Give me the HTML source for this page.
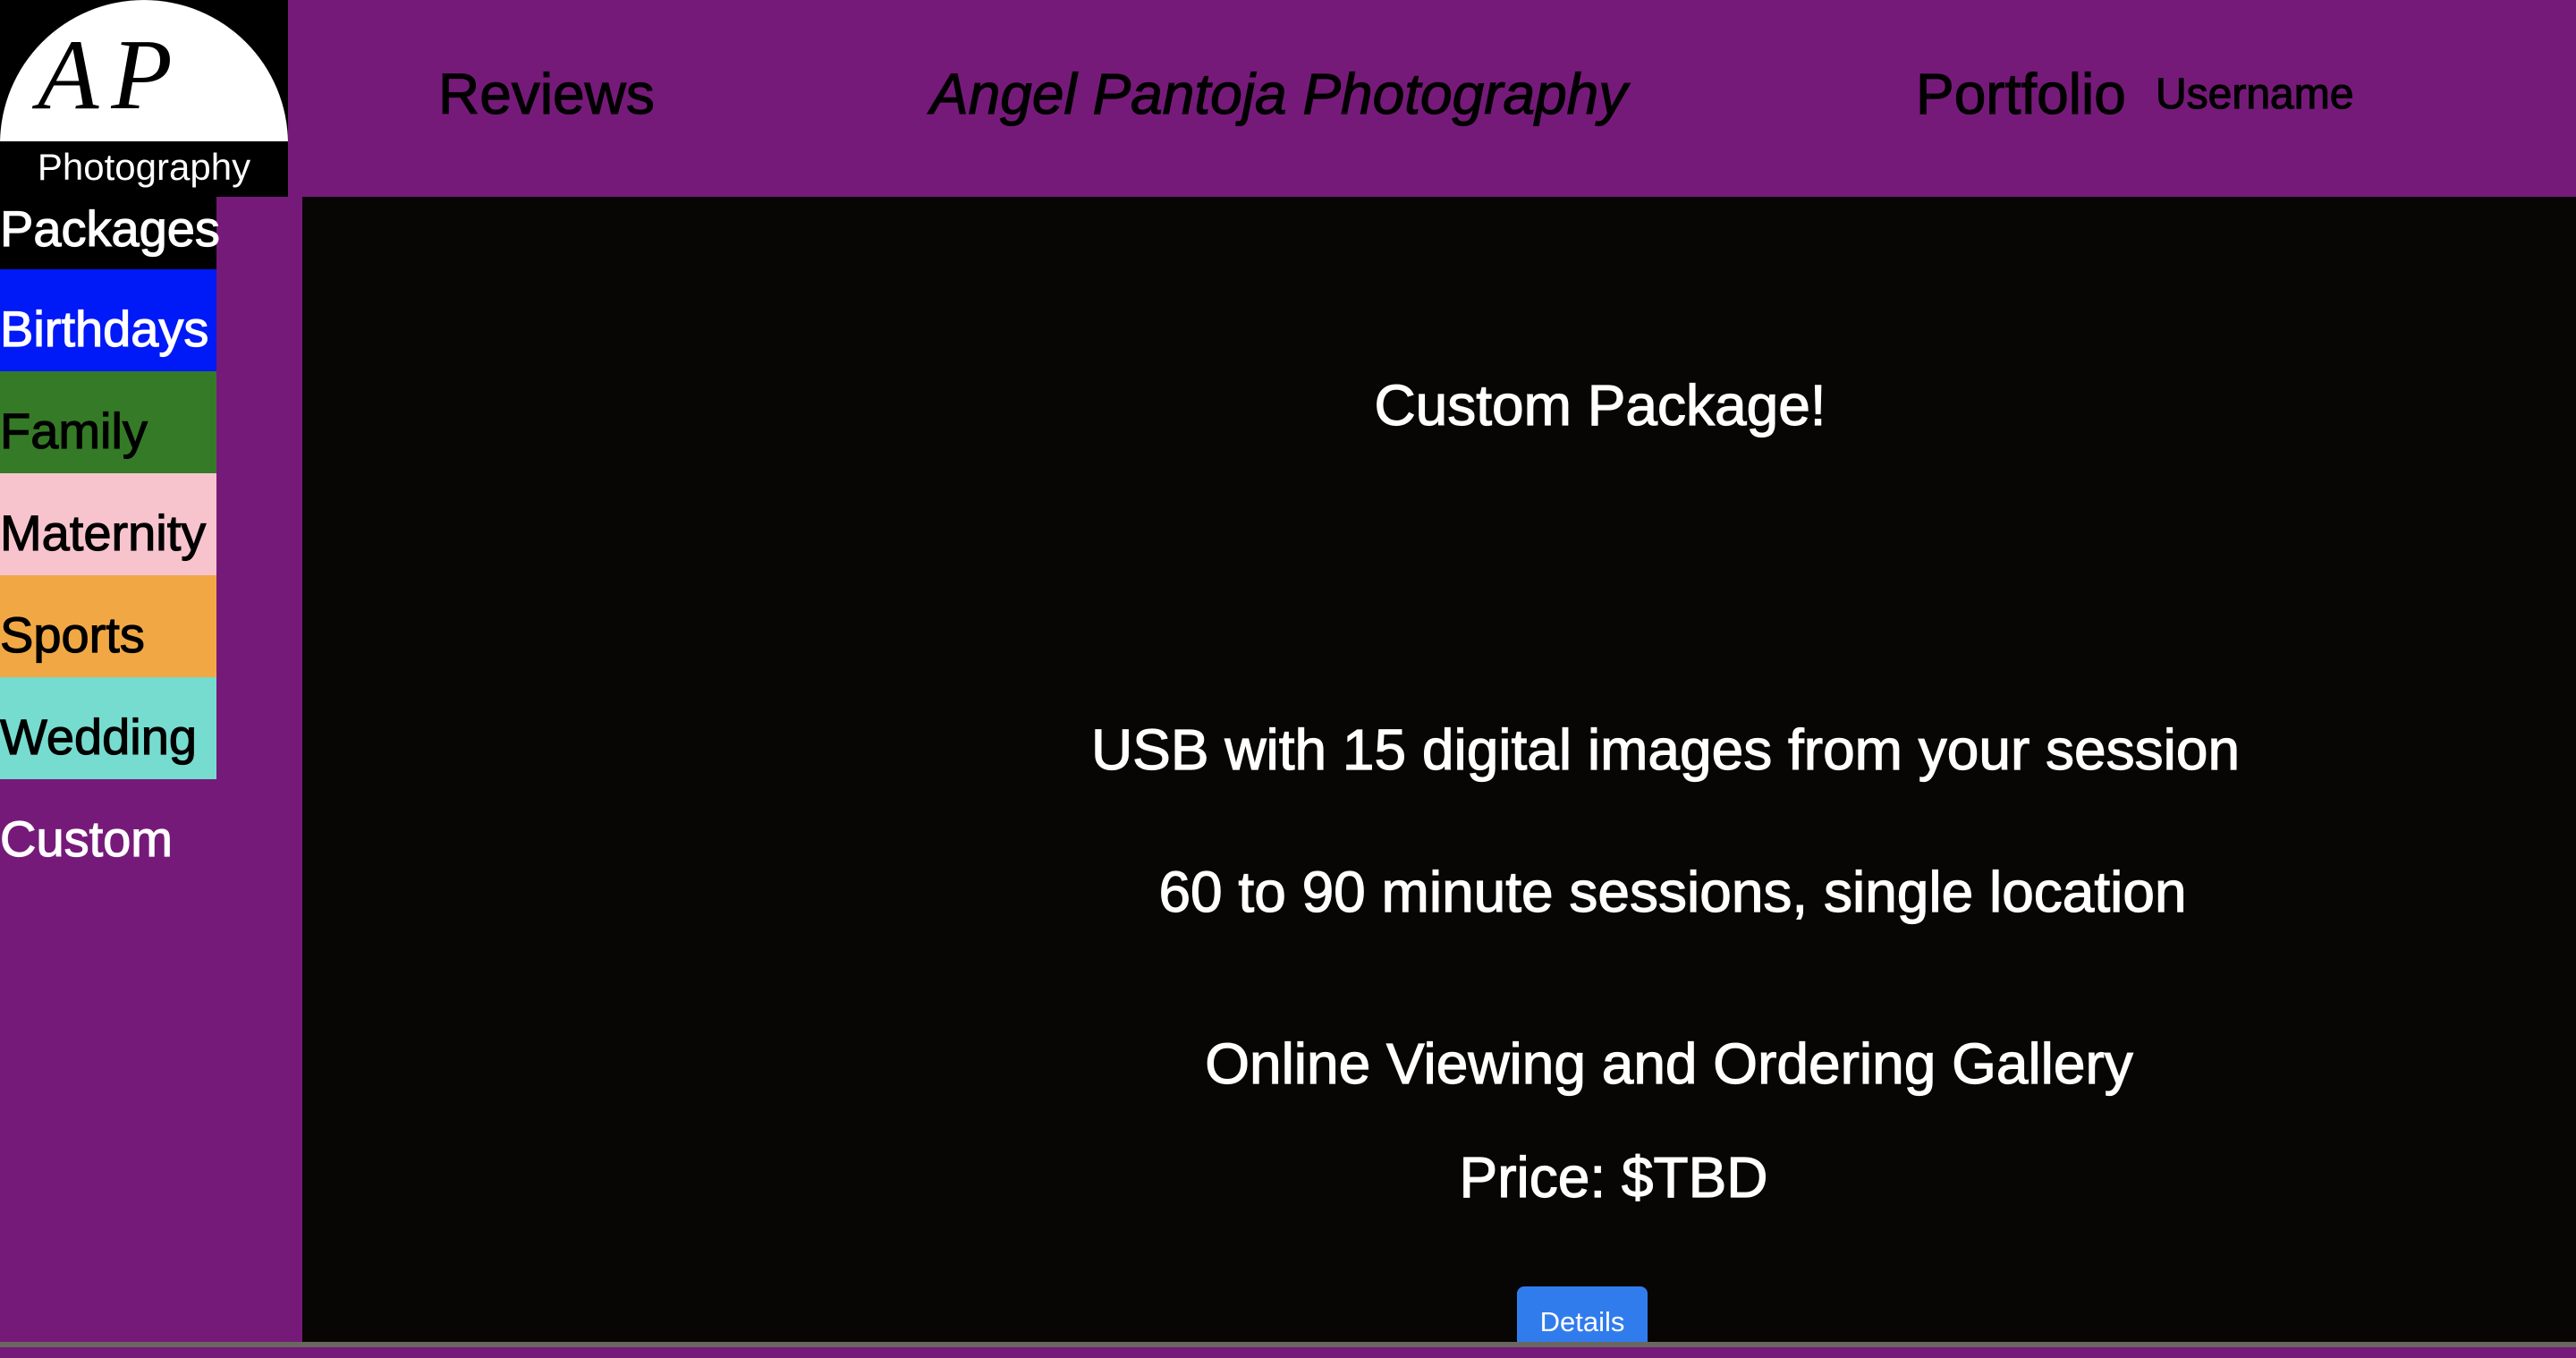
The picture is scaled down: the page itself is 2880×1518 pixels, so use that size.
<!DOCTYPE html>
<html><head><meta charset="utf-8"><style>
html,body{margin:0;padding:0;width:2880px;height:1506px;overflow:hidden;background:#761a7a;font-family:"Liberation Sans",sans-serif}
.a{position:absolute;white-space:nowrap}
.s{-webkit-text-stroke:1.2px currentColor}
.nav{position:absolute;left:0;width:242px;height:114px;font-size:56px;line-height:134px;-webkit-text-stroke:1.2px currentColor;white-space:nowrap}
.c{position:absolute;width:0;display:flex;justify-content:center;color:#fff;font-size:64px;white-space:nowrap;-webkit-text-stroke:1.2px #fff}
</style></head><body>
<div class="a" style="left:0;top:0;width:322px;height:220px;background:#000;overflow:hidden">
 <div style="position:absolute;left:0;top:0;width:322px;height:320px;border-radius:161px 161px 0 0;background:#fff;clip-path:inset(0 0 162px 0)"></div>
 <div class="a" style="left:42px;top:28px;font-family:'Liberation Serif',serif;font-style:italic;font-size:112px;line-height:112px;color:#000;letter-spacing:14px">AP</div>
 <div class="a" style="left:0;width:322px;top:158px;text-align:center;color:#fff;font-size:42px;line-height:58px">Photography</div>
</div>
<div class="a s" style="left:490px;top:68px;font-size:64px">Reviews</div>
<div class="a s" style="left:1040px;top:68px;font-size:64px;font-style:italic">Angel Pantoja Photography</div>
<div class="a s" style="left:2142px;top:68px;font-size:64px">Portfolio</div>
<div class="a s" style="left:2410px;top:78px;font-size:48px">Username</div>
<div class="a" style="left:338px;top:220px;width:2542px;height:1280px;background:#070604"></div>
<div class="a" style="left:0;top:1500px;width:2880px;height:6px;background:#6a6660"></div>
<div class="nav" style="top:220px;height:81px;line-height:72px;background:#000;color:#fff">Packages</div>
<div class="nav" style="top:301px;background:#0019f7;color:#fff">Birthdays</div>
<div class="nav" style="top:415px;background:#357a26;color:#000">Family</div>
<div class="nav" style="top:529px;background:#f7c4ce;color:#000">Maternity</div>
<div class="nav" style="top:643px;background:#f1a844;color:#000">Sports</div>
<div class="nav" style="top:757px;background:#76dccf;color:#000">Wedding</div>
<div class="nav" style="top:871px;color:#fff">Custom</div>
<div class="c" style="top:416px;left:1789px"><span>Custom Package!</span></div>
<div class="c" style="top:801px;left:1862px"><span>USB with 15 digital images from your session</span></div>
<div class="c" style="top:960px;left:1870px"><span>60 to 90 minute sessions, single location</span></div>
<div class="c" style="top:1152px;left:1866px"><span>Online Viewing and Ordering Gallery</span></div>
<div class="c" style="top:1279px;left:1804px"><span>Price: $TBD</span></div>
<div class="a" style="left:1696px;top:1438px;width:146px;height:62px;background:#317ced;border-radius:8px 8px 0 0;color:#fff;font-size:31px;text-align:center;line-height:80px">Details</div>
</body></html>
